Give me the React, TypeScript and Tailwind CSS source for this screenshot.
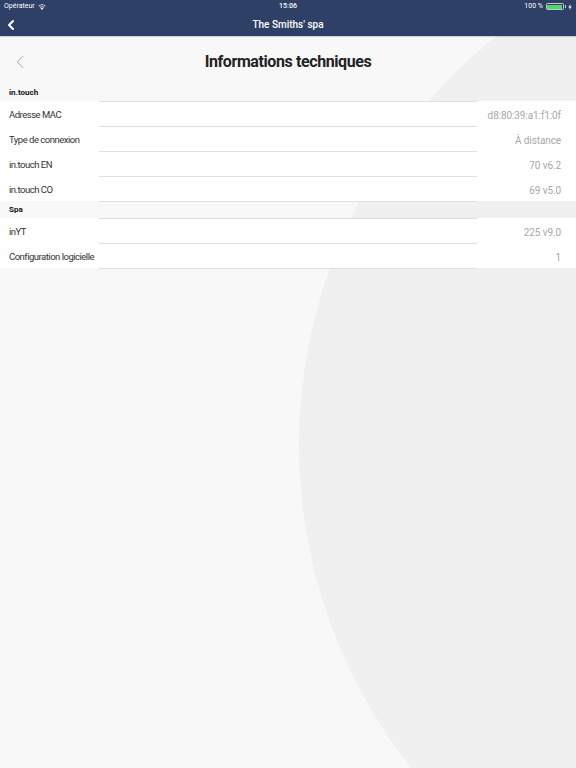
import { ChevronLeft } from 'lucide-react';

type Row = { label: string; value: string };

const sections: { title: string; rows: Row[] }[] = [
  {
    title: 'in.touch',
    rows: [
      { label: 'Adresse MAC', value: 'd8:80:39:a1:f1:0f' },
      { label: 'Type de connexion', value: 'À distance' },
      { label: 'in.touch EN', value: '70 v6.2' },
      { label: 'in.touch CO', value: '69 v5.0' },
    ],
  },
  {
    title: 'Spa',
    rows: [
      { label: 'inYT', value: '225 v9.0' },
      { label: 'Configuration logicielle', value: '1' },
    ],
  },
];

function Wifi() {
  return (
    <svg width="8" height="6" viewBox="0 0 16 12" fill="white">
      <path d="M8 12 L5.2 8.6 A4.4 4.4 0 0 1 10.8 8.6 Z" />
      <path d="M3.4 6.5 A7 7 0 0 1 12.6 6.5 L11.6 7.7 A5.5 5.5 0 0 0 4.4 7.7 Z" />
      <path d="M1 3.6 A10.5 10.5 0 0 1 15 3.6 L14 4.8 A9 9 0 0 0 2 4.8 Z" />
    </svg>
  );
}

function Battery() {
  return (
    <div className="flex items-center gap-[1px]">
      <div className="w-[18px] h-[7px] rounded-[1.5px] border border-white/70 p-[0.5px]">
        <div className="w-full h-full bg-[#4cd964] rounded-[0.5px]" />
      </div>
      <div className="w-[1px] h-[3px] bg-white/70" />
      <svg width="4" height="6" viewBox="0 0 4 7" fill="white" className="ml-[1px]">
        <path d="M2.5 0 L0 4 L1.8 4 L1.3 7 L4 2.8 L2.2 2.8 Z" />
      </svg>
    </div>
  );
}

export default function App() {
  return (
    <div
      className="relative w-full h-[768px] overflow-hidden bg-[#f8f8f8]"
      style={{ fontFamily: 'Roboto, "Liberation Sans", sans-serif' }}
    >
      {/* decorative circle behind content */}
      <div className="absolute left-[299px] top-[-77px] w-[1044px] h-[1044px] rounded-full bg-[#f0f0f0]" />

      <div className="relative">
        <div className="bg-[#2f4067]">
          <div className="h-[13px] flex items-center justify-between px-[4px] text-white text-[7px] leading-none">
            <div className="flex items-center gap-[3px] w-[100px]">
              <span>Opérateur</span>
              <Wifi />
            </div>
            <span className="font-medium">15:06</span>
            <div className="flex items-center justify-end gap-[3px] w-[100px]">
              <span>100 %</span>
              <Battery />
            </div>
          </div>
          <div className="relative h-[23px] flex items-center justify-center shadow-[0_1px_1px_rgba(0,0,0,0.15)]">
            <ChevronLeft size={16} strokeWidth={3} className="absolute left-[3px] text-white" />
            <span className="text-white text-[10px] font-medium">The Smiths' spa</span>
          </div>
        </div>

        <div className="relative h-[48px] flex items-center justify-center pt-[3px]">
          <ChevronLeft size={22} strokeWidth={1} className="absolute left-[9px] top-[15px] text-[#999]" />
          <h1 className="text-[16px] font-bold text-[#222] tracking-[-0.4px]">Informations techniques</h1>
        </div>

        {sections.map((s) => (
          <div key={s.title}>
            <div className="h-[17px] flex items-center pt-[1px] px-[9px] text-[8px] font-bold text-[#111]">
              {s.title}
            </div>
            {s.rows.map((r, i) => (
              <div key={r.label} className="relative h-[25px] bg-white flex items-center justify-between pt-[3px] pl-[9px] pr-[15px]">
                <div className="absolute top-0 left-[99px] w-[378px] h-[1px] bg-[#e0e0e0]" />
                {i === s.rows.length - 1 && (
                  <div className="absolute bottom-[-1px] left-[99px] w-[378px] h-[1px] bg-[#e0e0e0]" />
                )}
                <span className="text-[9.5px] text-[#333] tracking-[-0.5px]">{r.label}</span>
                <span className="text-[10px] text-[#a8a8a8] tracking-[-0.1px]">{r.value}</span>
              </div>
            ))}
          </div>
        ))}
      </div>
    </div>
  );
}
